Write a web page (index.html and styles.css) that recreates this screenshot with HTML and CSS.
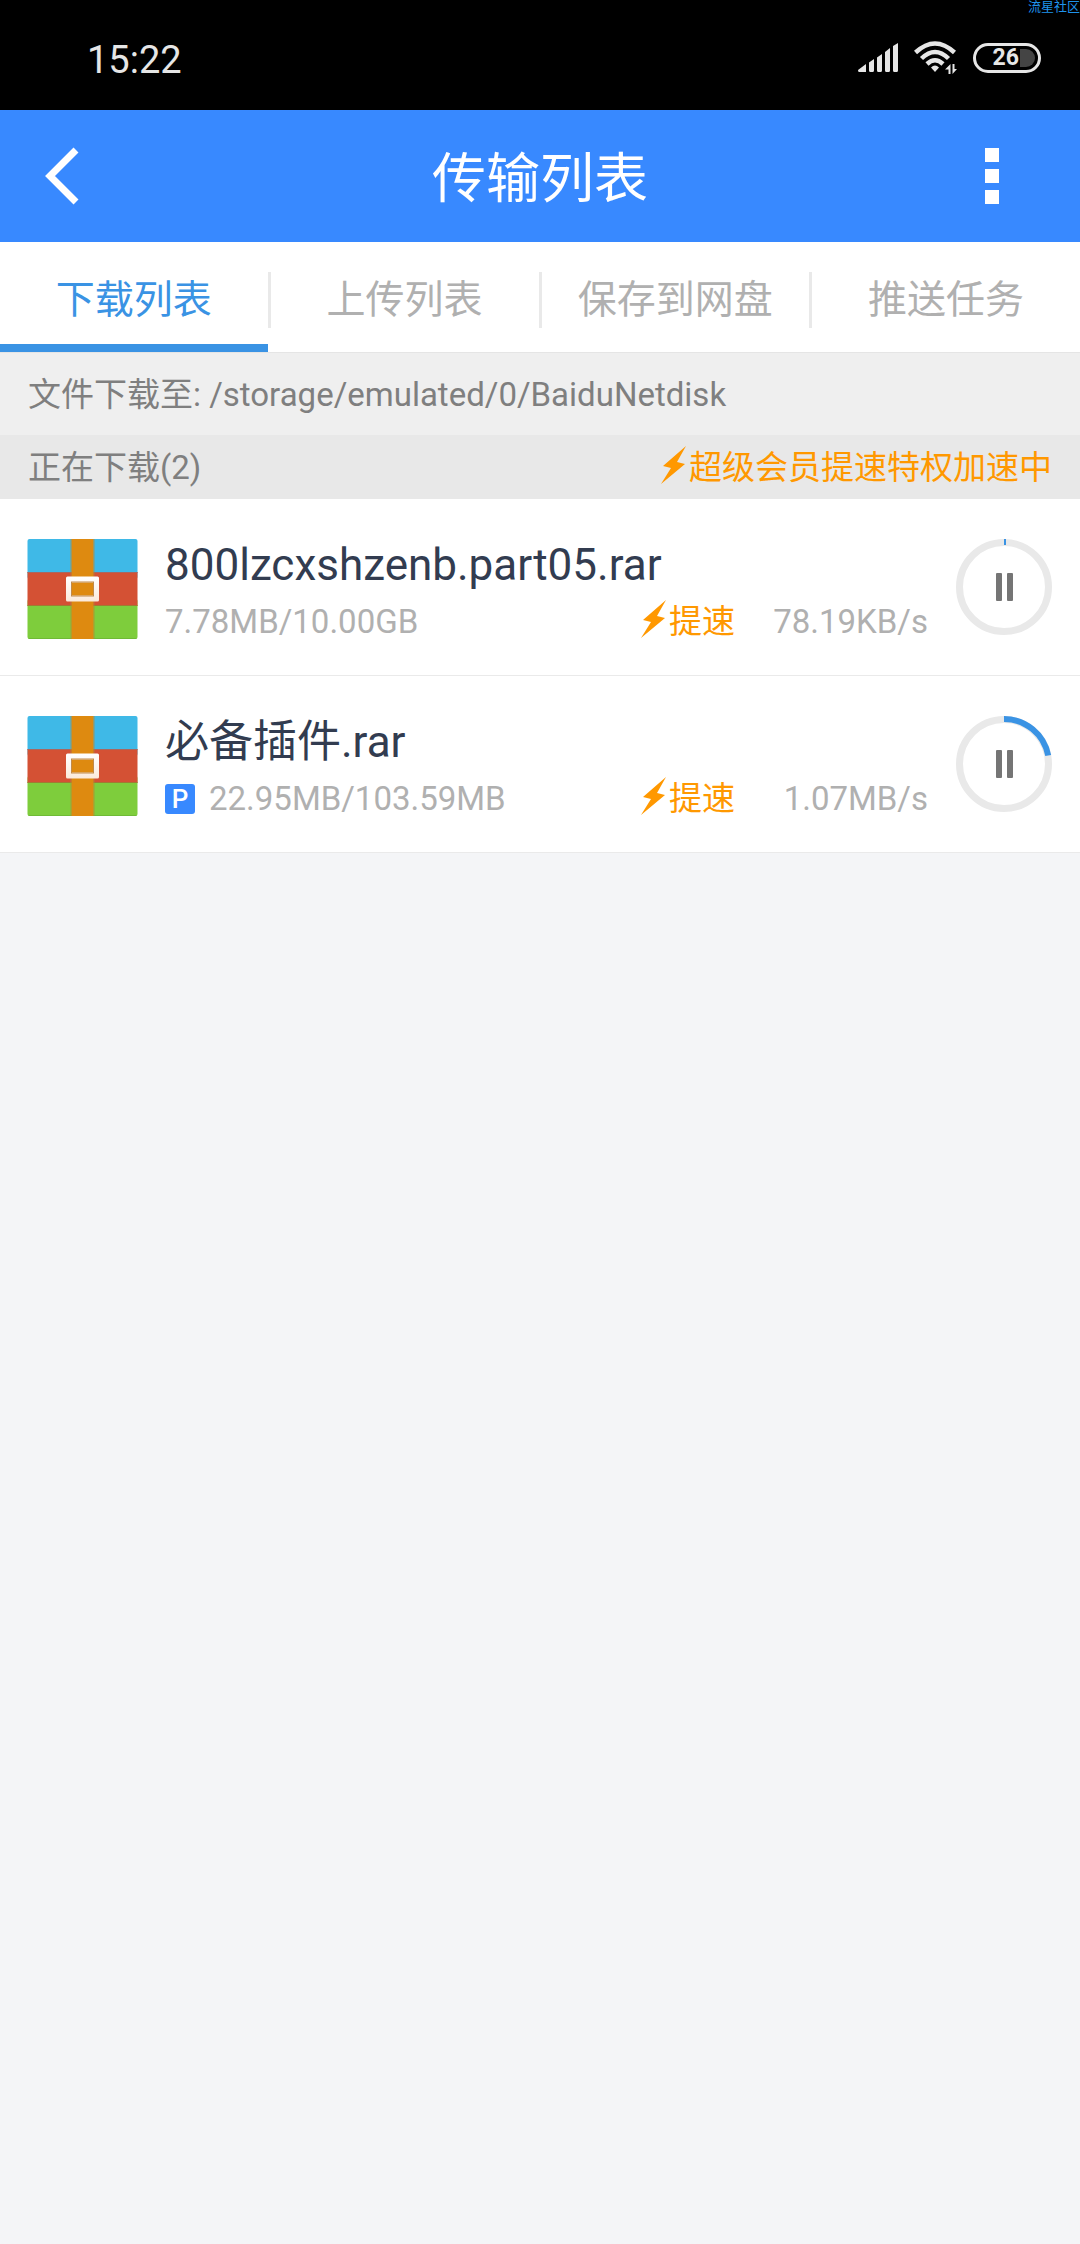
FILE: index.html
```html
<!DOCTYPE html>
<html lang="zh-CN">
<head>
  <meta charset="utf-8">
  <meta name="viewport" content="width=device-width, initial-scale=1">
  <title>传输列表</title>
  <link rel="stylesheet" href="styles.css">
</head>
<body>
  <svg class="defs" aria-hidden="true">
    <defs>
      <linearGradient id="buckle" x1="0" y1="0" x2="0" y2="1">
        <stop offset="0" stop-color="#ffffff"/>
        <stop offset="1" stop-color="#fbeadb"/>
      </linearGradient>
      <symbol id="archive" viewBox="0 0 110 100">
        <rect width="110" height="40" rx="2" fill="#3fb9e7"/>
        <rect y="60" width="110" height="40" rx="2" fill="#7ecd3c"/>
        <rect y="33" width="110" height="34" fill="#d45134"/>
        <path d="M0 33.5h110" stroke="#a9675f"/>
        <path d="M0 66.5h110" stroke="#a07b32"/>
        <path d="M1 99.5h108" stroke="#6fba36"/>
        <rect x="44" width="22" height="100" fill="#de8a10"/>
        <path d="M43.5 0v100M66.5 0v100" stroke="#b58a3a" stroke-opacity=".7"/>
        <path d="M40 37.500h30a1.500 1.500 0 0 1 1.500 1.500v22a1.500 1.500 0 0 1-1.500 1.500h-30a1.500 1.500 0 0 1-1.500-1.500v-22a1.500 1.500 0 0 1 1.500-1.500zM44 43.500v13h22v-13z" fill="url(#buckle)" fill-rule="evenodd"/>
        <rect x="44" y="43" width="22" height="14" fill="none" stroke="#c08a4a"/>
      </symbol>
      <symbol id="bolt" viewBox="0 0 26 38">
        <path d="M25 0L2 20L10 22L0 38L24 18L16 16Z" fill="#ff9800"/>
      </symbol>
      <symbol id="pause" viewBox="0 0 18 28">
        <rect width="6" height="28" rx="1" fill="#757575"/>
        <rect x="11" width="6" height="28" rx="1" fill="#757575"/>
      </symbol>
    </defs>
  </svg>

  <div class="status">
    <time class="clock">15:22</time>
    <div class="indicators">
      <svg class="signal" width="40" height="30" viewBox="0 0 40 30" fill="#e6e6e6" aria-hidden="true">
        <path d="M0 27L8 21v8H1q-1 0-1-2zM11 19.500L16 16v11.500q0 1.500-1.500 1.500h-2q-1.500 0-1.500-1.500zM19 14.500L24 11v16.500q0 1.500-1.500 1.500h-2q-1.500 0-1.500-1.500zM27 9L32 5v22.500q0 1.500-1.500 1.500h-2q-1.500 0-1.500-1.500zM35 3L40 0v27.500q0 1.500-1.500 1.500h-2q-1.500 0-1.500-1.500z"/>
      </svg>
      <svg class="wifi" width="43" height="34" viewBox="0 0 43 34" aria-hidden="true">
        <g fill="none" stroke="#e6e6e6" stroke-width="4.500">
          <path d="M1.500 11.500Q21 -6.500 40.500 11.500"/>
          <path d="M7.500 17.500Q21 4.500 34.500 17.500"/>
          <path d="M13 23Q21 15.500 29 23"/>
        </g>
        <path d="M17 26.500Q21 22.500 25 26.500L21 31Z" fill="#e6e6e6"/>
        <path d="M36.500 23v10h-2v-4.500h-3.500zM38.500 33V23h2v5h2.500z" fill="#e6e6e6"/>
      </svg>
      <div class="battery"><span class="level">26</span><span class="cell"></span></div>
    </div>
    <span class="mark">流星社区</span>
  </div>

  <header class="bar">
    <button class="icon-button" type="button" aria-label="返回">
      <svg width="34" height="58" viewBox="0 0 34 58" fill="none" stroke="#fff" stroke-width="7" aria-hidden="true"><path d="M31 3L5 29L31 55"/></svg>
    </button>
    <h1 class="title">传输列表</h1>
    <button class="icon-button more" type="button" aria-label="更多">
      <svg width="14" height="56" viewBox="0 0 14 56" fill="#fff" aria-hidden="true"><path d="M0 0h14v14H0zM0 21h14v14H0zM0 42h14v14H0z"/></svg>
    </button>
  </header>

  <nav class="tabs">
    <a class="tab active" href="#download" aria-current="page">下载列表</a>
    <a class="tab" href="#upload">上传列表</a>
    <a class="tab" href="#save">保存到网盘</a>
    <a class="tab" href="#push">推送任务</a>
  </nav>

  <main>
    <p class="path">文件下载至: /storage/emulated/0/BaiduNetdisk</p>
    <div class="section">
      <h2 class="section-title">正在下载(2)</h2>
      <span class="boost"><svg class="bolt" aria-hidden="true"><use href="#bolt"/></svg>超级会员提速特权加速中</span>
    </div>
    <ul class="list">
      <li class="item">
        <svg class="file-icon" aria-hidden="true"><use href="#archive"/></svg>
        <div class="info">
          <div class="name">800lzcxshzenb.part05.rar</div>
          <div class="meta">
            <span class="size">7.78MB/10.00GB</span>
            <span class="boost"><svg class="bolt" aria-hidden="true"><use href="#bolt"/></svg>提速</span>
            <span class="speed">78.19KB/s</span>
          </div>
        </div>
        <button class="progress" type="button" aria-label="暂停">
          <svg width="96" height="96" viewBox="0 0 96 96" fill="none" aria-hidden="true">
            <circle cx="48" cy="48" r="44.500" stroke="#e9e9e9" stroke-width="7"/>
            <path d="M48 3h2" stroke="#3a93e4" stroke-width="6"/>
            <use href="#pause" x="40" y="34" width="18" height="28"/>
          </svg>
        </button>
      </li>
      <li class="item">
        <svg class="file-icon" aria-hidden="true"><use href="#archive"/></svg>
        <div class="info">
          <div class="name">必备插件.rar</div>
          <div class="meta">
            <span class="badge">P</span>
            <span class="size">22.95MB/103.59MB</span>
            <span class="boost"><svg class="bolt" aria-hidden="true"><use href="#bolt"/></svg>提速</span>
            <span class="speed">1.07MB/s</span>
          </div>
        </div>
        <button class="progress" type="button" aria-label="暂停">
          <svg width="96" height="96" viewBox="0 0 96 96" fill="none" aria-hidden="true">
            <circle cx="48" cy="48" r="44.500" stroke="#e9e9e9" stroke-width="7"/>
            <path d="M48 3A45 45 0 0 1 92.200 39.500" stroke="#3a93e4" stroke-width="6"/>
            <use href="#pause" x="40" y="34" width="18" height="28"/>
          </svg>
        </button>
      </li>
    </ul>
  </main>
</body>
</html>
```
FILE: styles.css
```css
* {
  box-sizing: border-box;
}

body {
  margin: 0;
  min-height: 100vh;
  background: #f4f5f7;
  color: #7f7f7f;
  font-family: Roboto, "Noto Sans CJK SC", sans-serif;
  font-size: 33px;
  line-height: 48px;
}

h1,
h2,
p,
ul {
  margin: 0;
  padding: 0;
  font-weight: 400;
}

button {
  padding: 0;
  border: 0;
  background: none;
}

svg {
  display: block;
  flex: none;
}

.defs {
  position: absolute;
  width: 0;
  height: 0;
}

.status {
  position: relative;
  display: flex;
  align-items: center;
  justify-content: space-between;
  height: 110px;
  padding: 6px 39px 0 87px;
  background: #000;
  color: #e6e6e6;
}

.clock {
  padding-top: 4px;
  font-size: 38px;
}

.indicators {
  display: flex;
  align-items: center;
  gap: 16px;
}

.battery {
  display: flex;
  align-items: center;
  justify-content: flex-end;
  gap: 1px;
  width: 68px;
  height: 30px;
  padding-right: 3px;
  border: 3px solid #e6e6e6;
  border-radius: 15px;
}

.level {
  font-size: 23px;
  font-weight: 700;
}

.cell {
  width: 15px;
  height: 18px;
  border-radius: 0 9px 9px 0;
  background: #444;
}

.mark {
  position: absolute;
  top: 0;
  right: 0;
  color: #1f93ec;
  font-size: 13px;
  line-height: 13px;
}

.bar {
  display: grid;
  grid-template-columns: 124px 1fr 124px;
  align-items: center;
  height: 132px;
  background: #3889ff;
  color: #fff;
}

.icon-button {
  display: flex;
  align-items: center;
  justify-content: center;
  height: 100%;
}

.more {
  padding-right: 52px;
}

.title {
  padding-top: 8px;
  font-size: 54px;
  line-height: 80px;
  text-align: center;
}

.tabs {
  display: flex;
  height: 110px;
  background: #fff;
}

.tab {
  flex: 1;
  padding: 30px 3px 24px 0;
  background: linear-gradient(#e9e9e9, #e9e9e9) right 30px / 3px 56px no-repeat;
  color: #b0b0b0;
  font-size: 39px;
  line-height: 56px;
  text-align: center;
  text-decoration: none;
}

.tab:last-child {
  padding-right: 0;
  background: none;
}

.tab.active {
  background:
    linear-gradient(#e9e9e9, #e9e9e9) right 30px / 3px 56px no-repeat,
    linear-gradient(#3a93e4, #3a93e4) left bottom / calc(100% - 3px) 8px no-repeat;
  color: #3a93e4;
}

.path {
  padding: 18px 28px 16px;
  border-top: 1px solid #e5e5e5;
  background: #efefef;
}

.section {
  display: flex;
  align-items: center;
  justify-content: space-between;
  height: 64px;
  padding: 2px 28px 0;
  background: #e8e8e8;
}

.section-title {
  font-size: 33px;
}

.boost {
  display: flex;
  align-items: center;
  gap: 2px;
  color: #ff9800;
}

.bolt {
  width: 26px;
  height: 38px;
  margin-bottom: 6px;
}

.list {
  list-style: none;
}

.item {
  display: flex;
  align-items: flex-start;
  height: 177px;
  padding: 40px 28px 0 27px;
  border-bottom: 1px solid #eaeaea;
  background: #fff;
}

.file-icon {
  width: 111px;
  height: 100px;
}

.info {
  flex: 1;
  min-width: 0;
  padding: 0 28px 0 27px;
}

.name {
  color: #323c50;
  font-size: 44px;
  line-height: 52px;
}

.meta {
  display: flex;
  align-items: center;
  margin-top: 7px;
  color: #b0b0b0;
}

.size {
  flex: 1;
}

.badge {
  width: 30px;
  height: 30px;
  margin-right: 14px;
  border-radius: 3px;
  background: #3889ff;
  color: #fff;
  font-size: 26px;
  font-weight: 500;
  line-height: 31px;
  text-align: center;
}

.speed {
  width: 193px;
  text-align: right;
}
```
